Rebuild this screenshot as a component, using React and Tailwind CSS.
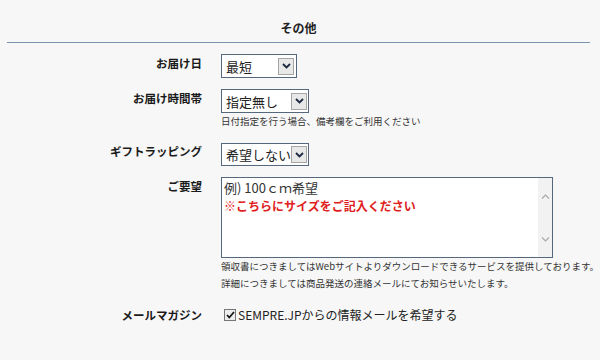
import { useState } from "react";

const FONT = { fontFamily: '"Noto Sans CJK JP", "Noto Sans", sans-serif' };

function Chevron() {
  return (
    <svg width="9" height="6" viewBox="0 0 9 6" fill="none">
      <path d="M1 1l3.5 3.5L8 1" stroke="#1c2740" strokeWidth="1.8" />
    </svg>
  );
}

// select box drawn like the old Windows one
function Select({ value, boxClass }) {
  return (
    <div
      className={`flex items-center justify-between bg-white border border-[#56687e] pl-[4px] ${boxClass}`}
    >
      <span className="text-[13px] leading-none text-[#222]">{value}</span>
      <span className="w-[16px] h-[17px] flex items-center justify-center bg-[#e8e8e8] border border-[#a6a6a6]">
        <Chevron />
      </span>
    </div>
  );
}

function Row({ label, labelClass, children, className }) {
  return (
    <div className={`flex items-start ${className}`}>
      <div
        className={`w-[202px] shrink-0 text-right font-bold text-[11.5px] leading-[18px] text-[#1a1a1a] ${labelClass}`}
      >
        {label}
      </div>
      <div className="ml-[19px]">{children}</div>
    </div>
  );
}

export default function App() {
  const [mail, setMail] = useState(true);

  return (
    <div className="w-[600px] h-[360px] overflow-hidden bg-[#f7f7f7]" style={FONT}>
      {/* Section heading */}
      <div className="ml-[7px] mr-[10px] pt-[19px] pb-[6px] border-b border-[#7b93b3] text-center font-bold text-[12px] leading-[17px] text-[#222]">
        その他
      </div>

      <Row label="お届け日" className="mt-[11px]">
        <Select value="最短" boxClass="w-[76px] h-[24px] pr-[2px]" />
      </Row>

      <Row label="お届け時間帯" className="mt-[11px]">
        <Select value="指定無し" boxClass="w-[88px] h-[24px] pr-[1px]" />
        <p className="mt-[1px] text-[9.5px] leading-[14px] text-[#333]">
          日付指定を行う場合、備考欄をご利用ください
        </p>
      </Row>

      <Row label="ギフトラッピング" className="mt-[15px]" labelClass="-mt-[1px]">
        <Select value="希望しない" boxClass="w-[88px] h-[23px] pr-[1px]" />
      </Row>

      <Row label="ご要望" className="mt-[11px]">
        <div className="flex w-[332px] h-[81px] bg-white border border-[#56687e]">
          <div className="flex-1 pl-[2px] pt-[1px] leading-[18px]">
            <div className="text-[13px] text-[#333]">例) 100ｃｍ希望</div>
            <div className="text-[12px] font-bold text-[#e0201c]">※こちらにサイズをご記入ください</div>
          </div>
          <div className="w-[14px] bg-[#f2f2f2] flex flex-col items-center justify-between pt-[16px] pb-[15px]">
            <svg width="9" height="5" viewBox="0 0 9 5" fill="none">
              <path d="M1 4.5L4.5 1 8 4.5" stroke="#a9a9a9" strokeWidth="1.2" />
            </svg>
            <svg width="9" height="5" viewBox="0 0 9 5" fill="none">
              <path d="M1 0.5L4.5 4 8 0.5" stroke="#a9a9a9" strokeWidth="1.2" />
            </svg>
          </div>
        </div>
        <div className="text-[9.5px] leading-[17px] text-[#333] whitespace-nowrap">
          <p>領収書につきましてはWebサイトよりダウンロードできるサービスを提供しております。</p>
          <p>詳細につきましては商品発送の連絡メールにてお知らせいたします。</p>
        </div>
      </Row>

      <Row label="メールマガジン" className="mt-[14px]">
        <label className="flex items-center h-[18px] ml-[3px] text-[12px] text-[#222] cursor-pointer">
          <span
            onClick={() => setMail(!mail)}
            className="w-[12px] h-[12px] flex items-center justify-center bg-[#ececec] border border-[#777]"
          >
            {mail && (
              <svg width="9" height="8" viewBox="0 0 9 8" fill="none">
                <path d="M1 4l2.3 2.5L8 1" stroke="#111" strokeWidth="1.7" />
              </svg>
            )}
          </span>
          <span className="ml-[2px]">SEMPRE.JPからの情報メールを希望する</span>
        </label>
      </Row>
    </div>
  );
}
